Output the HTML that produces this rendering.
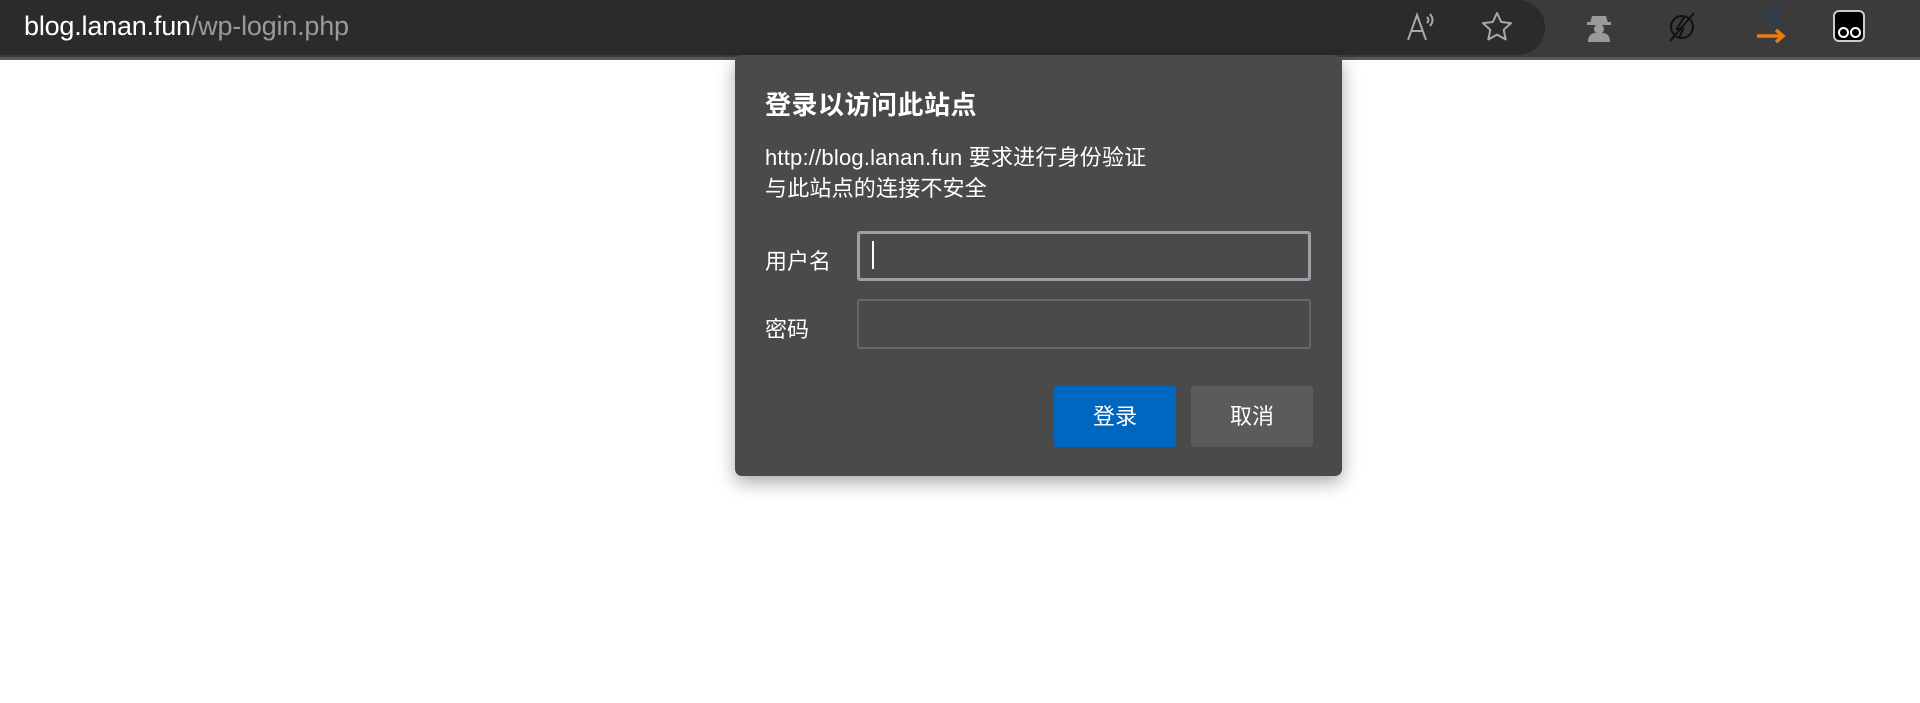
<!DOCTYPE html>
<html><head><meta charset="utf-8"><style>
*{margin:0;padding:0;box-sizing:border-box}
body{width:1920px;height:703px;background:#fff;position:relative;overflow:hidden;font-family:"Liberation Sans","Noto Sans CJK SC",sans-serif}
.bar{position:absolute;left:0;top:0;width:1920px;height:60px;background:#3b3b3b;border-bottom:3px solid #5a5a5a}
.addr{position:absolute;left:-20px;top:0;width:1565px;height:55px;background:#2b2b2b;border-radius:0 27px 27px 0}
.url{position:absolute;left:24px;top:11px;font-size:27px;color:#fff;letter-spacing:-0.2px}
.url span{color:#9a9a9a}
.ic{position:absolute;top:10px}
.dlg{position:absolute;left:735px;top:55px;width:607px;height:421px;background:#4a4a4a;border-radius:7px;box-shadow:0 6px 18px rgba(0,0,0,.35);color:#fff}
.t{position:absolute;left:30px;top:30px;font-size:26px;font-weight:bold;letter-spacing:0.5px}
.p{position:absolute;left:30px;top:87px;font-size:22px;line-height:31px;letter-spacing:0.2px}
.lab{position:absolute;left:30px;font-size:22px}
.in{position:absolute;left:122px;width:454px;height:50px;border:2px solid #666;border-radius:3px}
.in.f{border:3px solid #9ba0a6}
.cur{position:absolute;left:12px;top:7px;width:2px;height:28px;background:#fff}
.btn{position:absolute;top:331px;width:122px;height:61px;border-radius:3px;font-size:22px;text-align:center;line-height:61px}
</style></head><body>
<div class="bar"><div class="addr"></div>
<div class="url">blog.lanan.fun<span>/wp-login.php</span></div>
<svg class="ic" style="left:1405px" width="34" height="34" viewBox="0 0 34 34" fill="none" stroke="#a8a8a8" stroke-width="2"><path d="M3 30L12 5L21 30M6.5 21H17.5"/><path d="M22 7q3 3 0 6M25 4q5 6 0 12"/></svg>
<svg class="ic" style="left:1480px" width="34" height="34" viewBox="0 0 34 34" fill="none" stroke="#a8a8a8" stroke-width="2"><path d="M17 3l4.2 9 9.8 1.1-7.3 6.7 2 9.7L17 24.6 8.3 29.5l2-9.7L3 13.1l9.8-1.1z" stroke-linejoin="round"/></svg>
<svg class="ic" style="left:1584px" width="30" height="34" viewBox="0 0 30 34" fill="#9a9a9a"><path d="M8 6h14l2 7H6z"/><rect x="3" y="12" width="24" height="3"/><circle cx="15" cy="19" r="5"/><path d="M4 32q0-9 8-9h6q8 0 8 9z"/></svg>
<svg class="ic" style="left:1666px" width="32" height="34" viewBox="0 0 32 34" fill="none" stroke="#111" stroke-width="2"><circle cx="16" cy="17" r="11"/><path d="M18 7l-7 12h6l-4 9M28 3L4 31"/></svg>
<svg class="ic" style="left:1755px;top:8px" width="34" height="36"><path d="M14 2h12M16 2v20M22 2v20M16 2a5 5 0 0 0 0 10" stroke="#2c3e50" stroke-width="3" fill="#2c3e50"/><path d="M2 28h26M21 22l7 6-7 6" stroke="#f07a10" stroke-width="3.5" fill="none"/></svg>
<div class="ic" style="left:1833px;top:10px;width:32px;height:32px;background:#000;border:2px solid #ccc;border-radius:6px"><div style="position:absolute;left:3px;top:15px;width:11px;height:11px;border:2px solid #fff;border-radius:50%"></div><div style="position:absolute;left:15px;top:15px;width:11px;height:11px;border:2px solid #fff;border-radius:50%"></div></div>
</div>
<div class="dlg">
<div class="t">登录以访问此站点</div>
<div class="p">http://blog.lanan.fun 要求进行身份验证<br>与此站点的连接不安全</div>
<div class="lab" style="top:189px">用户名</div>
<div class="in f" style="top:176px"><div class="cur"></div></div>
<div class="lab" style="top:257px">密码</div>
<div class="in" style="top:244px"></div>
<div class="btn" style="left:319px;background:#0067c0">登录</div>
<div class="btn" style="left:456px;background:#5b5b5b">取消</div>
</div>
</body></html>
